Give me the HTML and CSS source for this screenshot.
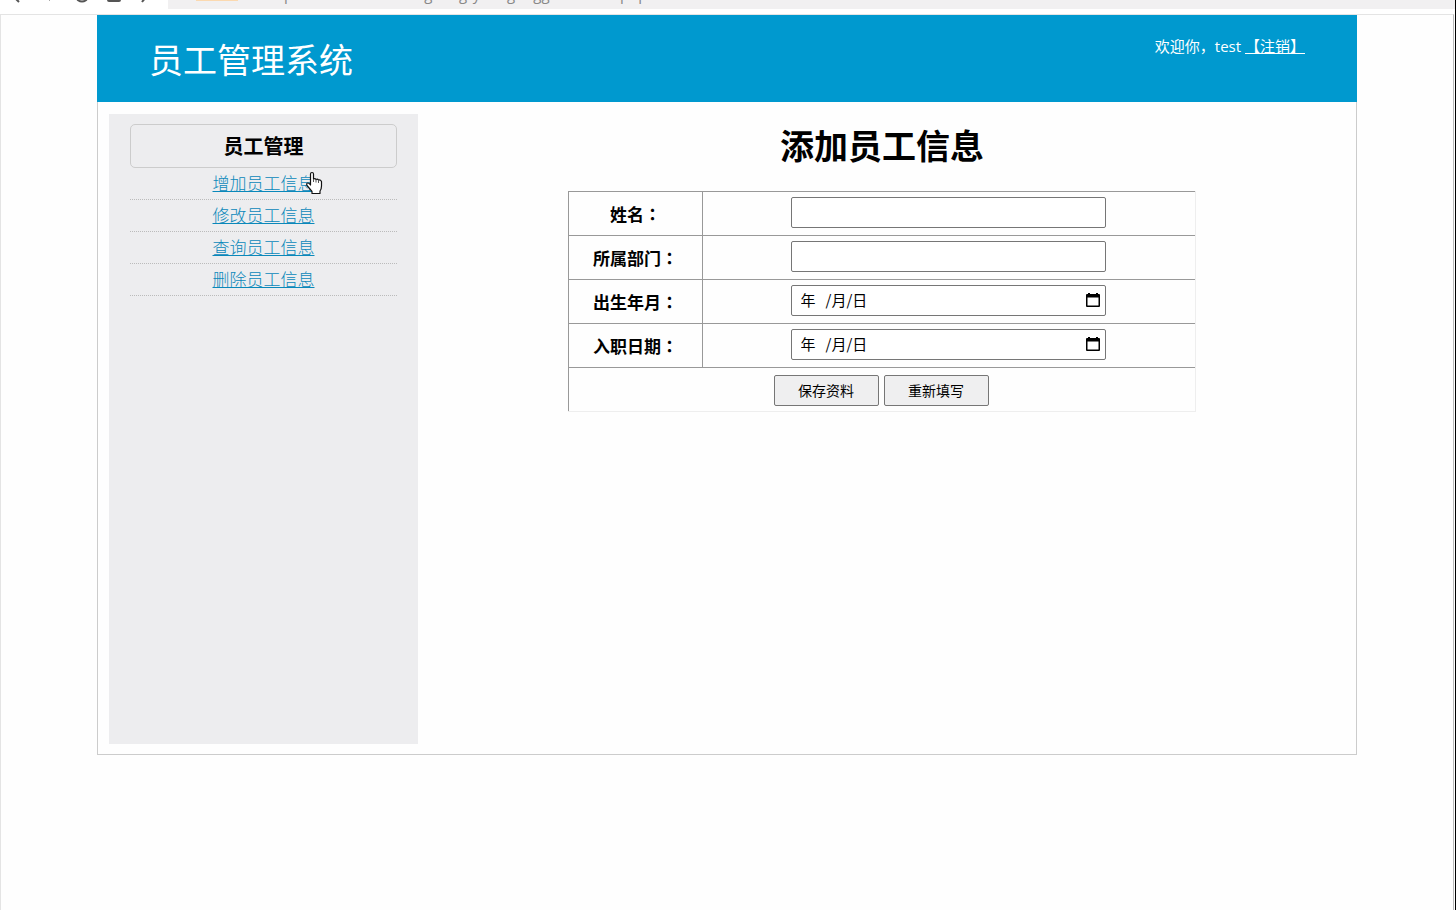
FILE: index.html
```html
<!DOCTYPE html>
<html lang="zh-CN">
<head>
<meta charset="utf-8">
<title>员工管理系统</title>
<link rel="stylesheet" href="styles.css">
</head>
<body>
<div class="toolbar">
  <svg class="toolbar-icons" width="168" height="9" viewBox="0 0 168 9" fill="none" stroke="#555" stroke-width="2" aria-hidden="true">
    <path d="M14-3l5 5"/>
    <path d="M53-3l-4 4" stroke="#aaa" stroke-width="1"/>
    <path d="M77-2a5 3.500 0 0 0 10 0"/>
    <path d="M108-3v3q0 1 1 1h10q1 0 1-1v-3"/>
    <path d="M146-3l-4 5"/>
  </svg>
  <div class="address"><span class="badge"></span><span class="url">http://localhost:81/dangdang/yuangongguanli/add.php</span></div>
</div>
<div class="viewport">
  <div class="page">
    <header class="header">
      <div class="brand">员工管理系统</div>
      <div class="welcome">欢迎你，test <a href="#">【注销】</a></div>
    </header>
    <div class="content">
      <nav class="sidebar">
        <h2 class="menu-title">员工管理</h2>
        <ul class="menu">
          <li><a href="#">增加员工信息</a>
            <svg class="cursor" width="18" height="24" viewBox="0 0 18 24" aria-hidden="true"><path d="M5.500 14V3Q5.500 1.500 7 1.500T8.500 3V8Q10 7 11 8.500Q12.500 7.500 13.500 9Q15.500 8.500 16.500 10.500V15Q16.500 18 15 20V22.500H7V20.500L2 14.500Q1 12 3 12Q4 12 5.500 14Z" fill="#fff" stroke="#111" stroke-width="1.200" stroke-linejoin="round"/><path d="M8.500 8v3M11 8.500v3M13.500 9v3" stroke="#555"/></svg>
          </li>
          <li><a href="#">修改员工信息</a></li>
          <li><a href="#">查询员工信息</a></li>
          <li><a href="#">删除员工信息</a></li>
        </ul>
      </nav>
      <main class="main">
        <h1 class="title">添加员工信息</h1>
        <form>
          <table class="form-table">
            <tr><th><label for="name">姓名<span class="punct" lang="zh-TW">：</span></label></th><td><input class="field" id="name" type="text"></td></tr>
            <tr><th><label for="dept">所属部门<span class="punct" lang="zh-TW">：</span></label></th><td><input class="field" id="dept" type="text"></td></tr>
            <tr><th><label for="birth">出生年月<span class="punct" lang="zh-TW">：</span></label></th><td><div class="date"><input class="field" id="birth" type="text" value="年   /月/日"><button class="picker" type="button" aria-label="选择出生年月"><svg width="14" height="15" viewBox="0 0 14 15"><path d="M2 0h2v1h6V0h2v1h1q1 0 1 1v11q0 1-1 1H1q-1 0-1-1V2q0-1 1-1h1zM1.500 4.500v8h11v-8z" fill="#000" fill-rule="evenodd"/></svg></button></div></td></tr>
            <tr><th><label for="hired">入职日期<span class="punct" lang="zh-TW">：</span></label></th><td><div class="date"><input class="field" id="hired" type="text" value="年   /月/日"><button class="picker" type="button" aria-label="选择入职日期"><svg width="14" height="15" viewBox="0 0 14 15"><path d="M2 0h2v1h6V0h2v1h1q1 0 1 1v11q0 1-1 1H1q-1 0-1-1V2q0-1 1-1h1zM1.500 4.500v8h11v-8z" fill="#000" fill-rule="evenodd"/></svg></button></div></td></tr>
            <tr><td colspan="2"><div class="actions"><button class="btn" type="submit">保存资料</button><button class="btn" type="reset">重新填写</button></div></td></tr>
          </table>
        </form>
      </main>
    </div>
  </div>
</div>
</body>
</html>
```
FILE: styles.css
```css
* { box-sizing: border-box; }
body {
  margin: 0;
  min-height: 100vh;
  display: flex;
  flex-direction: column;
  background: #fff;
  color: #000;
  font-family: "Open Sans", "Noto Sans CJK SC", sans-serif;
  border-right: 1px solid #000;
}
.toolbar { display: flex; height: 14px; align-items: flex-start; }
.toolbar-icons { flex: none; }
.address {
  flex: 1;
  display: flex;
  align-items: flex-end;
  gap: 26px;
  height: 9px;
  padding-left: 28px;
  overflow: hidden;
  background: #f1f0f1;
}
.badge { width: 42px; height: 1px; background: #fbd9b0; align-self: flex-start; }
.url { font-size: 15px; line-height: 30px; color: #888; }
.viewport {
  flex: 1;
  border: solid #e4e4e4;
  border-width: 1px 1px 0;
  border-right-color: #bbb;
  margin-right: 1px;
  background: #fefefe;
}
.page { max-width: 1260px; margin: 0 auto; border: 1px solid #ccc; border-top: 0; }
.header {
  display: flex;
  justify-content: space-between;
  align-items: flex-start;
  margin: 0 -1px;
  padding: 19px 52px 18px;
  background: #0099cf;
  color: #fff;
}
.brand { font-size: 34px; line-height: 50px; font-family: "Noto Sans CJK SC", sans-serif; }
.welcome { font-size: 15px; line-height: 24px; }
.welcome a { color: inherit; }
.punct { font-family: "Noto Sans CJK TC", sans-serif; }
.content { display: flex; padding: 12px 10px 10px 11px; }
.sidebar { flex: 0 0 309px; min-height: 630px; padding: 10px 21px; background: #ededef; text-align: center; }
.menu-title {
  margin: 0;
  padding-top: 2px;
  border: 1px solid #ccc;
  border-radius: 5px;
  font-size: 20px;
  line-height: 40px;
}
.menu { margin: 0; padding: 0; list-style: none; }
.menu li { position: relative; border-bottom: 1px dotted #bbb; font-size: 17px; line-height: 31px; }
.menu a { color: #0a88ba; font-weight: 300; }
.cursor { position: absolute; left: 175px; top: 3px; }
.main { flex: 1; }
.title { margin: 0 0 19px; padding-top: 6px; font-size: 34px; line-height: 52px; text-align: center; }
.form-table { width: 628px; margin: 0 auto; border-spacing: 0; border: 1px solid #eee; border-top: 0; border-left: 0; }
.form-table th, .form-table td { height: 44px; padding: 0; border-top: 1px solid #999; border-left: 1px solid #999; text-align: center; }
.form-table th { width: 134px; padding-top: 2px; font-size: 17px; line-height: 24px; }
.form-table td { padding: 0 2px 2px 0; line-height: 0; }
.field {
  width: 315px;
  height: 31px;
  padding: 0 9px 2px;
  border: 1px solid #767676;
  border-radius: 2px;
  background: #fff;
  font: 15px "Noto Sans CJK SC", sans-serif;
  white-space: pre;
  vertical-align: top;
}
.date { display: inline-block; position: relative; }
.picker { position: absolute; right: 6px; top: 8px; padding: 0; border: 0; background: none; line-height: 0; }
.actions { display: flex; justify-content: center; gap: 5px; padding-top: 4px; }
.btn {
  width: 105px;
  height: 31px;
  padding: 0 0 2px;
  border: 1px solid #767676;
  border-radius: 2px;
  background: #efeff0;
  color: #000;
  font: 14px "Noto Sans CJK SC", sans-serif;
}
```
